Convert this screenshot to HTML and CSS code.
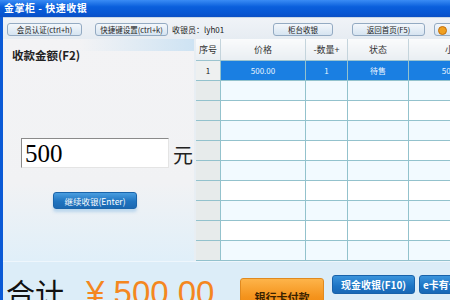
FILE: index.html
```html
<!DOCTYPE html>
<html lang="zh-CN">
<head>
  <meta charset="UTF-8">
  <title>金掌柜 - 快速收银</title>
  <link rel="stylesheet" href="styles.css">
</head>
<body>
  <div class="window">
    <!-- barre de titre -->
    <div class="titlebar">金掌柜 - 快速收银</div>

    <div class="frame">
      <div class="toolbar">
        <button class="tb-btn btn-member">会员认证(ctrl+h)</button>
        <button class="tb-btn btn-keys">快捷键设置(ctrl+k)</button>
        <span class="cashier">收银员：lyh01</span>
        <button class="tb-btn btn-counter">柜台收银</button>
        <button class="tb-btn btn-home">返回首页(F5)</button>
        <button class="tb-btn btn-extra"><span class="dot"></span></button>
      </div>

      <div class="main">
        <div class="pay-panel">
          <h2 class="pay-title">收款金额(F2)</h2>
          <div class="amount-row">
            <div class="amount-input">500</div>
            <span class="unit">元</span>
          </div>
          <button class="continue-btn">继续收银(Enter)</button>
        </div>

        <div class="cart">
          <table>
            <thead>
              <tr>
                <th class="c-no">序号</th>
                <th class="c-price">价格</th>
                <th class="c-qty">-数量+</th>
                <th class="c-state">状态</th>
                <th class="c-sub">小计</th>
              </tr>
            </thead>
            <tbody>
              <tr class="selected">
                <td class="c-no">1</td>
                <td>500.00</td>
                <td>1</td>
                <td>待售</td>
                <td>500.00</td>
              </tr>
              <tr><td class="c-no"></td><td></td><td></td><td></td><td></td></tr>
              <tr><td class="c-no"></td><td></td><td></td><td></td><td></td></tr>
              <tr><td class="c-no"></td><td></td><td></td><td></td><td></td></tr>
              <tr><td class="c-no"></td><td></td><td></td><td></td><td></td></tr>
              <tr><td class="c-no"></td><td></td><td></td><td></td><td></td></tr>
              <tr><td class="c-no"></td><td></td><td></td><td></td><td></td></tr>
              <tr><td class="c-no"></td><td></td><td></td><td></td><td></td></tr>
              <tr><td class="c-no"></td><td></td><td></td><td></td><td></td></tr>
              <tr><td class="c-no"></td><td></td><td></td><td></td><td></td></tr>
            </tbody>
          </table>
        </div>
      </div>

      <div class="footer">
        <span class="total-label">合计</span>
        <span class="total-value">¥ 500.00</span>
        <button class="card-btn">银行卡付款</button>
        <button class="cash-btn">现金收银(F10)</button>
        <button class="cash-btn ecard-btn">e卡有卡</button>
      </div>
    </div>
  </div>
</body>
</html>
```

FILE: styles.css
```css
/* fenêtre de caisse */
body {
  margin: 0;
  padding: 0;
  width: 450px;
  height: 300px;
  overflow: hidden;
  font-family: "Noto Sans CJK SC", "DejaVu Sans", sans-serif;
  background: #dcedf8;
}

.window {
  width: 450px;
  height: 300px;
  display: flex;
  flex-direction: column;
}

.titlebar {
  height: 17px;
  line-height: 16px;
  padding-left: 4px;
  color: #fff;
  font-size: 10px;
  font-weight: bold;
  letter-spacing: 0.5px;
  background: linear-gradient(to bottom, #3a8cf5, #0a5fdc 40%, #0856d2 80%, #0b4fc4);
}

.frame {
  flex: 1;
  display: flex;
  flex-direction: column;
  border-left: 3px solid #0b5ad6;
  min-height: 0;
}

/* barre d'outils */
.toolbar {
  height: 21px;
  display: flex;
  align-items: center;
  background: linear-gradient(to bottom, #f0f3f7, #e6ecf2);
  border-top: 1px solid #c9d7e6;
}

.toolbar > * {
  flex-shrink: 0;
}

.tb-btn {
  height: 13px;
  padding: 0;
  margin-top: 2px;
  font-family: "Noto Sans CJK SC", sans-serif;
  font-size: 7.5px;
  line-height: 11px;
  color: #222;
  white-space: nowrap;
  overflow: hidden;
  background: linear-gradient(to bottom, #f3f7fb, #d6e4f1);
  border: 1px solid #93aac2;
  border-radius: 3px;
}

.btn-member { width: 75px; margin-left: 4px; }
.btn-keys { width: 73px; margin-left: 13px; }
.btn-counter { width: 60px; }
.btn-home { width: 73px; margin-left: 19px; }
.btn-extra { width: 30px; margin-left: 9px; text-align: left; padding-left: 3px; }

.dot {
  display: inline-block;
  width: 7px;
  height: 7px;
  border-radius: 50%;
  background: #f0a020;
  border: 1px solid #c07010;
  vertical-align: middle;
}

.cashier {
  width: 101px;
  margin-left: 4px;
  margin-top: 1px;
  font-size: 8px;
  color: #222;
  white-space: nowrap;
}

/* zone principale */
.main {
  height: 222px;
  display: flex;
}

.pay-panel {
  width: 191px;
  flex-shrink: 0;
  border-right: 2px solid #e8eef3;
  display: flex;
  flex-direction: column;
  background:
    linear-gradient(to right, rgba(255,255,255,0) 40%, rgba(190,220,242,0.7)) top / 100% 12px no-repeat,
    linear-gradient(to bottom, #f3f3f5 0%, #f1f2f4 65%, #e0eff9 100%);
}

.pay-title {
  margin: 9px 0 0 9px;
  font-size: 11.5px;
  line-height: 14px;
  font-weight: bold;
  color: #222;
}

.amount-row {
  margin-top: 76px;
  margin-left: 18px;
  display: flex;
  align-items: flex-end;
}

.amount-input {
  width: 143px;
  height: 28px;
  padding-left: 3px;
  font-family: "Liberation Serif", serif;
  font-size: 25px;
  line-height: 29px;
  color: #000;
  background: #fff;
  border-top: 1px solid #8a8a8a;
  border-left: 1px solid #8a8a8a;
  border-right: 1px solid #e4e4e4;
  border-bottom: 1px solid #e4e4e4;
}

.unit {
  margin-left: 4px;
  font-size: 20px;
  line-height: 26px;
  color: #222;
}

.continue-btn {
  align-self: flex-start;
  margin: 24px 0 0 50px;
  width: 84px;
  height: 17px;
  padding: 0;
  font-family: "Noto Sans CJK SC", sans-serif;
  font-size: 8.5px;
  color: #fff;
  background: linear-gradient(to bottom, #4a9ee0, #1f74c0 55%, #1a68b2);
  border: 1px solid #1a64aa;
  border-radius: 3px;
  box-shadow: 0 3px 3px rgba(140, 190, 230, 0.5);
}

/* tableau */
.cart {
  flex: 1;
  overflow: hidden;
  background: #f4fbff;
}

.cart table {
  border-collapse: collapse;
  table-layout: fixed;
  width: 299px;
  font-size: 8px;
  color: #333;
}

.cart th {
  height: 21px;
  padding: 0;
  font-weight: normal;
  font-size: 9px;
  color: #333;
  background: linear-gradient(to bottom, #fafbfc, #e9eef2);
  border-right: 1px solid #c4d4dc;
  border-bottom: 1px solid #9cc4cf;
}

.cart td {
  height: 19px;
  padding: 0;
  text-align: center;
  border: 1px solid #93c2cd;
  border-top: none;
  background: #fff;
}

.cart tbody tr:nth-child(even) td {
  background: #f2faff;
}

.cart td.c-no {
  background: #e7ebeb;
  border-left: none;
}

.cart tbody tr:nth-child(even) td.c-no {
  background: #e7ebeb;
}

.cart tr.selected td {
  background: #1a7fe2;
  color: #e8f4ff;
}

.cart tr.selected td.c-no {
  background: #eef0f0;
  color: #222;
}

.c-no { width: 24px; }
.c-price { width: 84px; }
.c-qty { width: 41px; }
.c-state { width: 60px; }
.c-sub { width: 90px; }

/* pied : total et paiement */
.footer {
  flex: 1;
  display: flex;
  align-items: flex-start;
  background: #dcedf8;
  border-top: 1px solid #eef6fc;
  overflow: hidden;
}

.footer > * {
  flex-shrink: 0;
  white-space: nowrap;
}

.total-label {
  margin: 12px 0 0 3px;
  font-size: 29px;
  line-height: 36px;
  color: #111;
}

.total-value {
  margin: 13px 0 0 22px;
  width: 140px;
  font-family: "Liberation Sans", sans-serif;
  font-size: 33px;
  line-height: 36px;
  color: #f4871f;
}

.card-btn {
  margin: 16px 0 0 14px;
  width: 84px;
  height: 32px;
  padding: 6px 0 0;
  font-family: "Noto Sans CJK SC", sans-serif;
  font-size: 11px;
  font-weight: bold;
  color: #3a2200;
  background: linear-gradient(to bottom, #fdb44a, #f4931c 60%, #ef8710);
  border: 1px solid #e08a20;
  border-radius: 3px;
}

.cash-btn {
  margin: 13px 0 0 8px;
  width: 83px;
  height: 19px;
  padding: 0;
  font-family: "Noto Sans CJK SC", sans-serif;
  font-size: 10px;
  font-weight: bold;
  color: #fff;
  background: linear-gradient(to bottom, #3b94dc, #1c74c4 60%, #1868b6);
  border: 1px solid #1862aa;
  border-radius: 3px;
}

.ecard-btn {
  margin-left: 4px;
  width: 40px;
  text-align: left;
  padding-left: 3px;
}
```
